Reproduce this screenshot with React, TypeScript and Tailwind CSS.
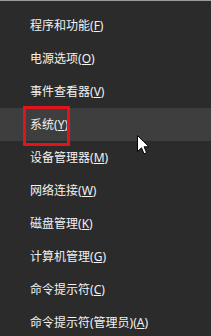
const items: { label: string; key: string; active?: boolean }[] = [
  { label: '程序和功能', key: 'F' },
  { label: '电源选项', key: 'O' },
  { label: '事件查看器', key: 'V' },
  { label: '系统', key: 'Y', active: true },
  { label: '设备管理器', key: 'M' },
  { label: '网络连接', key: 'W' },
  { label: '磁盘管理', key: 'K' },
  { label: '计算机管理', key: 'G' },
  { label: '命令提示符', key: 'C' },
  { label: '命令提示符(管理员)', key: 'A' },
]

function Cursor() {
  return (
    <svg
      className="absolute left-[137px] top-[134px]"
      width="13"
      height="20"
      viewBox="0 0 13 20"
    >
      <path
        d="M0.5 0.5 L0.5 16.5 L4.5 12.8 L7 18.8 L9.6 17.7 L7.1 11.8 L12 11.8 Z"
        fill="#ffffff"
        stroke="#000000"
        strokeWidth="1"
        strokeLinejoin="miter"
      />
    </svg>
  )
}

export default function App() {
  return (
    <div
      className="relative h-[336px] w-[211px] overflow-hidden border-t border-[#9a9a9a] bg-[#2b2b2b] pt-[8px] text-[12px] text-[#f2f2f2]"
      style={{ fontFamily: '"Noto Sans", "Noto Sans CJK SC", sans-serif' }}
    >
      {items.map((item) => (
        <div
          key={item.key}
          className={`relative flex h-[33px] items-center pl-[30px] ${item.active ? 'bg-[#3e3e3e]' : ''}`}
        >
          <span className="whitespace-nowrap leading-none">
            {item.label}(<span className="underline underline-offset-1">{item.key}</span>)
          </span>
          {item.active && (
            <div className="absolute left-[23px] top-[-2px] h-[40px] w-[47px] border-[3px] border-[#e3131b]" />
          )}
        </div>
      ))}
      <Cursor />
    </div>
  )
}
